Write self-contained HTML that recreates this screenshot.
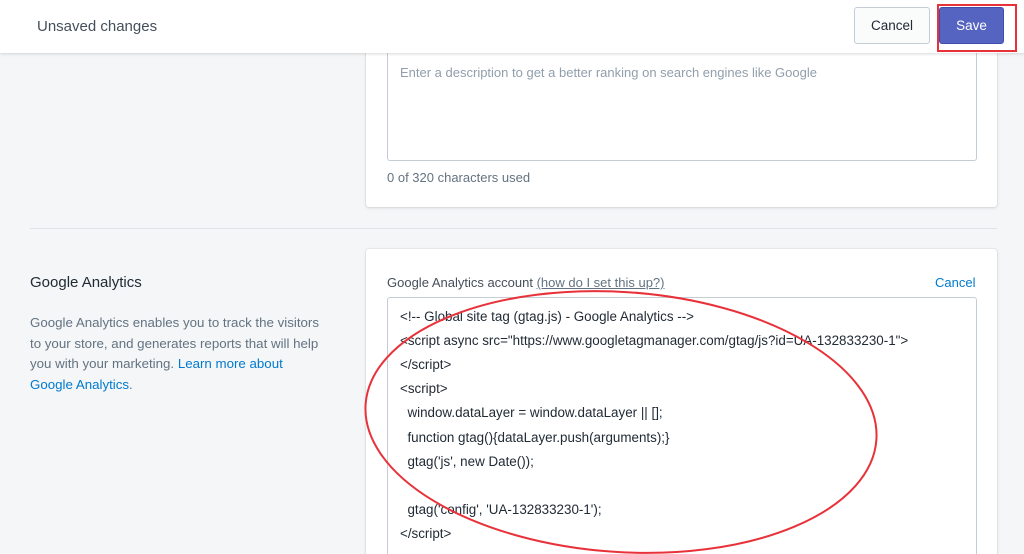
<!DOCTYPE html>
<html><head><meta charset="utf-8"><style>
*{box-sizing:border-box;margin:0;padding:0}
html,body{width:1024px;height:554px;overflow:hidden}
body{background:#f4f6f8;font-family:"Liberation Sans",sans-serif;position:relative}
.top{position:absolute;left:0;top:0;width:1024px;height:53px;background:#fff;box-shadow:0 1px 3px rgba(0,0,0,.15);z-index:5}
.top .t{position:absolute;left:37px;top:18px;font-size:15px;color:#454f5b}
.btn{position:absolute;top:7px;height:37px;border-radius:3px;font-size:13.5px;text-align:center;line-height:36px}
.cancel{left:854px;width:76px;background:#fafbfb;border:1px solid #c4cdd5;color:#212b36}
.save{left:939px;width:65px;background:#5563c1;color:#fff;border:1px solid #3f4eae}
.red{position:absolute;left:937px;top:4px;width:80px;height:48px;border:2px solid #e8323a}
.card{position:absolute;background:#fff;border-radius:3px;box-shadow:0 0 0 1px rgba(63,63,68,.05),0 1px 3px rgba(63,63,68,.15)}
.ta{position:absolute;border:1px solid #c4cdd5;border-radius:3px;background:#fff}
.ph{position:absolute;left:400px;top:65px;font-size:13px;color:#919eab}
.small{position:absolute;font-size:13px;color:#637381}
.line{position:absolute;left:30px;top:228px;width:967px;height:1px;background:#dfe3e8}
.code{position:absolute;left:400px;font-size:13.4px;color:#212b36;white-space:pre}
a{color:#007ace;text-decoration:none}
</style></head><body>
<div class="top"><div class="t">Unsaved changes</div>
<div class="btn cancel">Cancel</div><div class="btn save">Save</div><div class="red"></div></div>
<div class="card" style="left:366px;top:20px;width:631px;height:187px"></div>
<div class="ta" style="left:387px;top:30px;width:590px;height:131px"></div>
<div class="ph">Enter a description to get a better ranking on search engines like Google</div>
<div class="small" style="left:387px;top:170px">0 of 320 characters used</div>
<div class="line"></div>
<div style="position:absolute;left:30px;top:274px;font-size:15px;color:#212b36">Google Analytics</div>
<div style="position:absolute;left:30px;top:313px;width:298px;font-size:13.3px;line-height:20.5px;color:#637381">Google Analytics enables you to track the visitors to your store, and generates reports that will help you with your marketing. <a>Learn more about Google Analytics</a>.</div>
<div class="card" style="left:366px;top:249px;width:631px;height:320px"></div>
<div style="position:absolute;left:387px;top:275px;font-size:13px;color:#454f5b">Google Analytics account <span style="color:#637381;text-decoration:underline">(how do I set this up?)</span></div>
<div style="position:absolute;left:935px;top:275px;font-size:13px"><a>Cancel</a></div>
<div class="ta" style="left:387px;top:297px;width:590px;height:270px"></div>
<div class="code" style="top:309px">&lt;!-- Global site tag (gtag.js) - Google Analytics --&gt;</div>
<div class="code" style="top:333px">&lt;script async src="https://www.googletagmanager.com/gtag/js?id=UA-132833230-1"&gt;</div>
<div class="code" style="top:357px">&lt;/script&gt;</div>
<div class="code" style="top:381px">&lt;script&gt;</div>
<div class="code" style="top:405px">  window.dataLayer = window.dataLayer || [];</div>
<div class="code" style="top:430px">  function gtag(){dataLayer.push(arguments);}</div>
<div class="code" style="top:454px">  gtag('js', new Date());</div>
<div class="code" style="top:502px">  gtag('config', 'UA-132833230-1');</div>
<div class="code" style="top:526px">&lt;/script&gt;</div>
<svg style="position:absolute;left:0;top:0" width="1024" height="554"><ellipse cx="621" cy="422" rx="256" ry="130" transform="rotate(4 621 422)" fill="none" stroke="#e8323a" stroke-width="2"/></svg>
</body></html>
